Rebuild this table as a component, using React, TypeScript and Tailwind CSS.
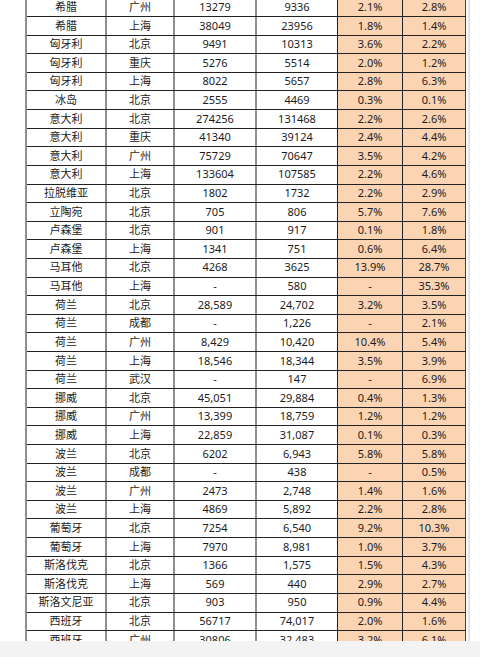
import React from "react";

type Row = [string, string, string, string, string, string];

const rows: Row[] = [
  ["希腊", "广州", "13279", "9336", "2.1%", "2.8%"],
  ["希腊", "上海", "38049", "23956", "1.8%", "1.4%"],
  ["匈牙利", "北京", "9491", "10313", "3.6%", "2.2%"],
  ["匈牙利", "重庆", "5276", "5514", "2.0%", "1.2%"],
  ["匈牙利", "上海", "8022", "5657", "2.8%", "6.3%"],
  ["冰岛", "北京", "2555", "4469", "0.3%", "0.1%"],
  ["意大利", "北京", "274256", "131468", "2.2%", "2.6%"],
  ["意大利", "重庆", "41340", "39124", "2.4%", "4.4%"],
  ["意大利", "广州", "75729", "70647", "3.5%", "4.2%"],
  ["意大利", "上海", "133604", "107585", "2.2%", "4.6%"],
  ["拉脱维亚", "北京", "1802", "1732", "2.2%", "2.9%"],
  ["立陶宛", "北京", "705", "806", "5.7%", "7.6%"],
  ["卢森堡", "北京", "901", "917", "0.1%", "1.8%"],
  ["卢森堡", "上海", "1341", "751", "0.6%", "6.4%"],
  ["马耳他", "北京", "4268", "3625", "13.9%", "28.7%"],
  ["马耳他", "上海", "-", "580", "-", "35.3%"],
  ["荷兰", "北京", "28,589", "24,702", "3.2%", "3.5%"],
  ["荷兰", "成都", "-", "1,226", "-", "2.1%"],
  ["荷兰", "广州", "8,429", "10,420", "10.4%", "5.4%"],
  ["荷兰", "上海", "18,546", "18,344", "3.5%", "3.9%"],
  ["荷兰", "武汉", "-", "147", "-", "6.9%"],
  ["挪威", "北京", "45,051", "29,884", "0.4%", "1.3%"],
  ["挪威", "广州", "13,399", "18,759", "1.2%", "1.2%"],
  ["挪威", "上海", "22,859", "31,087", "0.1%", "0.3%"],
  ["波兰", "北京", "6202", "6,943", "5.8%", "5.8%"],
  ["波兰", "成都", "-", "438", "-", "0.5%"],
  ["波兰", "广州", "2473", "2,748", "1.4%", "1.6%"],
  ["波兰", "上海", "4869", "5,892", "2.2%", "2.8%"],
  ["葡萄牙", "北京", "7254", "6,540", "9.2%", "10.3%"],
  ["葡萄牙", "上海", "7970", "8,981", "1.0%", "3.7%"],
  ["斯洛伐克", "北京", "1366", "1,575", "1.5%", "4.3%"],
  ["斯洛伐克", "上海", "569", "440", "2.9%", "2.7%"],
  ["斯洛文尼亚", "北京", "903", "950", "0.9%", "4.4%"],
  ["西班牙", "北京", "56717", "74,017", "2.0%", "1.6%"],
  ["西班牙", "广州", "30806", "32,483", "3.2%", "6.1%"],
];

const cell = "flex items-center justify-center h-full";

export default function App() {
  return (
    <div
      className="w-[480px] h-[657px] flex flex-col bg-white text-[11px] text-[#1c1c1c] overflow-hidden"
      style={{ fontFamily: '"Noto Sans", "Noto Sans CJK SC", sans-serif' }}
    >
      <div className="flex-1 min-h-0 overflow-hidden flex items-start">
        <div className="ml-[25px] mt-[-1.6px] border-l-2 border-[#8f8f8f] flex flex-col shrink-0">
          {rows.map((r, i) => (
            <div key={i} className="flex shrink-0 h-[18.62px] border-b border-[#222]">
              <div className={`${cell} w-[80px] border-r-2 border-[#8f8f8f]`}>{r[0]}</div>
              <div className={`${cell} w-[68px] border-r-2 border-[#8f8f8f]`}>{r[1]}</div>
              <div className={`${cell} w-[82px] border-r-2 border-[#8f8f8f]`}>{r[2]}</div>
              <div className={`${cell} w-[81px] border-r border-[#222]`}>{r[3]}</div>
              <div className={`${cell} w-[65px] border-r border-[#222] bg-[#fbd4b4]`}>{r[4]}</div>
              <div className={`${cell} w-[63px] border-r border-[#444] bg-[#fbd4b4]`}>{r[5]}</div>
            </div>
          ))}
        </div>
        <div className="ml-[2px] w-[2px] h-full bg-[#e2e2e2]" />
      </div>
      <div className="h-[16px] shrink-0 bg-[#f3f3f3]" />
    </div>
  );
}
